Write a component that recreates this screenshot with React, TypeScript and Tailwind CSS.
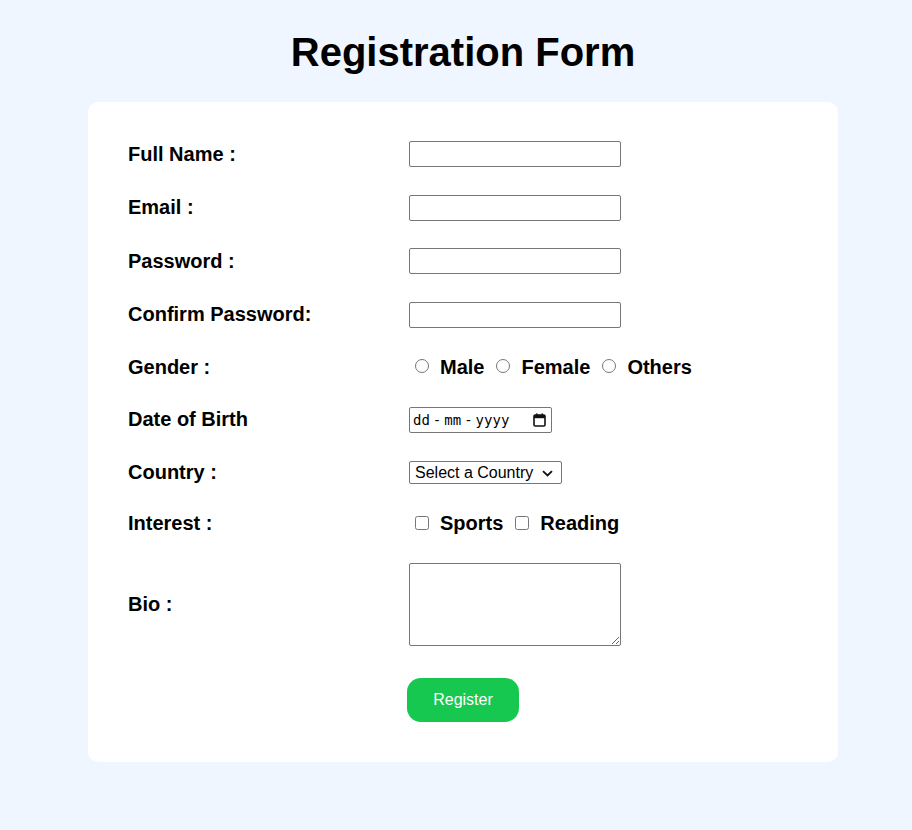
import React from "react";

const rows = [
  { label: "Full Name :", h: "h-[54px]", type: "text" },
  { label: "Email :", h: "h-[53px]", type: "email" },
  { label: "Password :", h: "h-[54px]", type: "password" },
  { label: "Confirm Password:", h: "h-[53px]", type: "password" },
];

const textInput =
  "w-[212px] h-[26px] border border-[#767676] rounded-[2px] bg-white px-[2px]";

function Row({ label, h, children }: any) {
  return (
    <div className={`grid grid-cols-[281px_1fr] items-center ${h}`}>
      <label className="text-[20px] font-bold leading-[23px]">{label}</label>
      <div className="flex items-center">{children}</div>
    </div>
  );
}

function Choice({ type, name, label, first }: any) {
  return (
    <>
      <input
        type={type}
        name={name}
        className={`w-[14px] h-[14px] m-0 ${first ? "ml-[6px]" : "ml-[12px]"} mt-[-2px]`}
      />
      <span className="ml-[11px] text-[20px] font-bold leading-[23px]">{label}</span>
    </>
  );
}

// dd-mm-yyyy date field with the calendar button
function DateField() {
  return (
    <div className="w-[143px] h-[26px] border border-[#767676] rounded-[2px] bg-white flex items-center pl-[2px] pr-[5px] font-['DejaVu_Sans_Mono',monospace] text-[14px] leading-[16px]">
      <span className="px-[1px]">dd</span>
      <span className="px-[2px]">-</span>
      <span className="px-[1px]">mm</span>
      <span className="px-[2px]">-</span>
      <span className="px-[1px]">yyyy</span>
      <svg className="ml-auto" width="13" height="14" viewBox="0 0 13 14">
        <rect x="1" y="2" width="11" height="11" rx="1.2" fill="none" stroke="#111" strokeWidth="1.6" />
        <rect x="1" y="2" width="11" height="3.2" fill="#111" />
        <rect x="3" y="0.5" width="1.6" height="2.5" fill="#111" />
        <rect x="8.4" y="0.5" width="1.6" height="2.5" fill="#111" />
      </svg>
    </div>
  );
}

export default function App() {
  return (
    <div className="min-h-screen bg-[#eff6ff] font-['Liberation_Sans',Arial,sans-serif] text-black">
      <div className="ml-[88px] w-[750px] pt-[27px]">
        <h1 className="text-center text-[40px] font-bold leading-[50px]">
          Registration Form
        </h1>
        <form
          className="mt-[25px] bg-white rounded-[10px] px-[40px] pt-[25px] pb-[22px]"
          onSubmit={(e) => e.preventDefault()}
        >
          {rows.map((r) => (
            <Row key={r.label} label={r.label} h={r.h}>
              <input type={r.type} className={textInput} />
            </Row>
          ))}

          <Row label="Gender :" h="h-[52px]">
            <Choice type="radio" name="gender" label="Male" first />
            <Choice type="radio" name="gender" label="Female" />
            <Choice type="radio" name="gender" label="Others" />
          </Row>

          <Row label="Date of Birth" h="h-[53px]">
            <DateField />
          </Row>

          <Row label="Country :" h="h-[52px]">
            <div className="relative mt-[1px]">
              <select className="w-[153px] h-[23px] border border-[#767676] rounded-[2px] bg-white pl-[5px] text-[16px] leading-[19px] appearance-none">
                <option>Select a Country</option>
                <option>India</option>
                <option>USA</option>
                <option>UK</option>
              </select>
              <svg
                className="absolute right-[9px] top-[9px] pointer-events-none"
                width="11"
                height="7"
                viewBox="0 0 11 7"
              >
                <path d="M1 1.2l4.5 4.3 4.5-4.3" fill="none" stroke="#111" strokeWidth="1.8" />
              </svg>
            </div>
          </Row>

          <Row label="Interest :" h="h-[51px]">
            <Choice type="checkbox" name="sports" label="Sports" first />
            <Choice type="checkbox" name="reading" label="Reading" />
          </Row>

          <Row label="Bio :" h="h-[111px]">
            <textarea className="w-[212px] h-[83px] border border-[#767676] rounded-[2px] bg-white px-[2px]" />
          </Row>

          <div className="grid grid-cols-[281px_1fr] items-center h-[80px]">
            <div />
            <div>
              <button
                type="submit"
                className="ml-[-2px] w-[112px] h-[44px] rounded-[14px] bg-[#17c850] text-white text-[16px]"
              >
                Register
              </button>
            </div>
          </div>
        </form>
      </div>
    </div>
  );
}
